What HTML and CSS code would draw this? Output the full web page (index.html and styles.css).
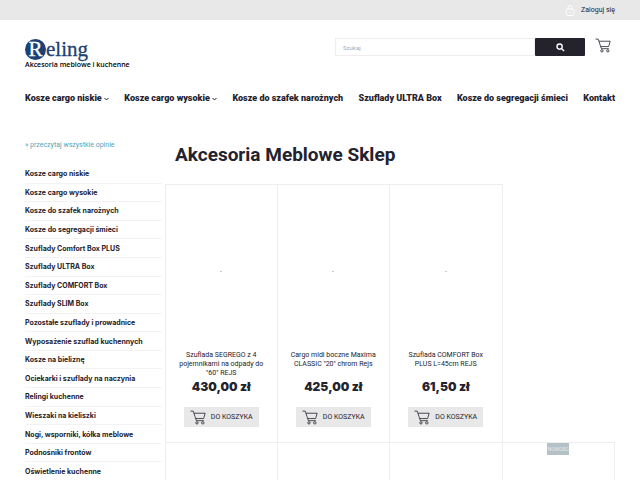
FILE: index.html
```html
<!DOCTYPE html>
<html lang="pl">
<head>
    <title>Akcesoria Meblowe Sklep</title>
    <meta charset="UTF-8">
    <link rel="stylesheet" href="styles.css">
</head>
<body>
    <svg class="symbols" aria-hidden="true">
        <symbol id="cart" viewBox="0 0 30 28">
            <path d="M1 2h5l6 18h14M7.500 6h21l-3 10H11" />
            <circle cx="13" cy="24" r="2.200" />
            <circle cx="24" cy="24" r="2.200" />
        </symbol>
    </svg>

    <div class="topbar">
        <a href="#" class="login">
            <svg class="lock" viewBox="0 0 10 12"><path d="M3 5V3.500a2 2 0 0 1 4 0V5" /><rect x="1" y="5" width="8" height="6.500" rx="2" /><path d="M5 7.500v2" /></svg>
            Zaloguj się
        </a>
    </div>

    <header class="header">
        <a href="#" class="logo">
            <span class="logo-name"><span class="logo-letter">R</span>eling</span>
            <span class="logo-text">Akcesoria meblowe i kuchenne</span>
        </a>
        <form class="search">
            <input type="text" name="search" placeholder="Szukaj" aria-label="Szukaj">
            <button type="submit" aria-label="Szukaj">
                <svg viewBox="0 0 10 10"><circle cx="4" cy="4" r="2.900" /><path d="M6.300 6.300L9 9" /></svg>
            </button>
        </form>
        <a href="#" class="basket" aria-label="Koszyk"><svg class="cart"><use href="#cart" /></svg></a>
    </header>

    <nav class="menu">
        <a href="#">Kosze cargo niskie <svg class="arrow" viewBox="0 0 5 4"><path d="M0.500 1l2 2 2-2" /></svg></a>
        <a href="#">Kosze cargo wysokie <svg class="arrow" viewBox="0 0 5 4"><path d="M0.500 1l2 2 2-2" /></svg></a>
        <a href="#">Kosze do szafek narożnych</a>
        <a href="#">Szuflady ULTRA Box</a>
        <a href="#">Kosze do segregacji śmieci</a>
        <a href="#">Kontakt</a>
    </nav>

    <div class="content">
        <aside class="sidebar">
            <a href="#" class="reviews">» przeczytaj wszystkie opinie</a>
            <ul class="categories">
                <li><a href="#">Kosze cargo niskie</a></li>
                <li><a href="#">Kosze cargo wysokie</a></li>
                <li><a href="#">Kosze do szafek narożnych</a></li>
                <li><a href="#">Kosze do segregacji śmieci</a></li>
                <li><a href="#">Szuflady Comfort Box PLUS</a></li>
                <li><a href="#">Szuflady ULTRA Box</a></li>
                <li><a href="#">Szuflady COMFORT Box</a></li>
                <li><a href="#">Szuflady SLIM Box</a></li>
                <li><a href="#">Pozostałe szuflady i prowadnice</a></li>
                <li><a href="#">Wyposażenie szuflad kuchennych</a></li>
                <li><a href="#">Kosze na bieliznę</a></li>
                <li><a href="#">Ociekarki i szuflady na naczynia</a></li>
                <li><a href="#">Relingi kuchenne</a></li>
                <li><a href="#">Wieszaki na kieliszki</a></li>
                <li><a href="#">Nogi, wsporniki, kółka meblowe</a></li>
                <li><a href="#">Podnośniki frontów</a></li>
                <li><a href="#">Oświetlenie kuchenne</a></li>
            </ul>
        </aside>

        <main class="shop">
            <h1>Akcesoria Meblowe Sklep</h1>
            <div class="products">
                <div class="product">
                    <div class="photo"></div>
                    <a href="#" class="name">Szuflada SEGREGO z 4 pojemnikami na odpady do "60" REJS</a>
                    <strong class="price">430,00 zł</strong>
                    <button type="button" class="buy"><svg class="cart"><use href="#cart" /></svg>DO KOSZYKA</button>
                </div>
                <div class="product">
                    <div class="photo"></div>
                    <a href="#" class="name">Cargo midi boczne Maxima CLASSIC "20" chrom Rejs</a>
                    <strong class="price">425,00 zł</strong>
                    <button type="button" class="buy"><svg class="cart"><use href="#cart" /></svg>DO KOSZYKA</button>
                </div>
                <div class="product">
                    <div class="photo"></div>
                    <a href="#" class="name">Szuflada COMFORT Box PLUS L=45cm REJS</a>
                    <strong class="price">61,50 zł</strong>
                    <button type="button" class="buy"><svg class="cart"><use href="#cart" /></svg>DO KOSZYKA</button>
                </div>
            </div>
            <div class="products">
                <div class="product"></div>
                <div class="product"></div>
                <div class="product"></div>
                <div class="product"><span class="badge">NOWOŚĆ</span></div>
            </div>
        </main>
    </div>
</body>
</html>
```
FILE: styles.css
```css
* {
    box-sizing: border-box;
}

body {
    height: 100vh;
    margin: 0;
    overflow: hidden;
    background: #fff;
    color: #23222d;
    font-family: Roboto, "Liberation Sans", sans-serif;
    font-size: 7px;
}

a {
    color: inherit;
    text-decoration: none;
}

svg {
    fill: none;
    stroke: currentColor;
}

.symbols {
    position: absolute;
    width: 0;
    height: 0;
}

/* top bar */
.topbar {
    display: flex;
    justify-content: flex-end;
    height: 20px;
    padding: 0 25px;
    background: #e8e8e8;
}

.login {
    display: flex;
    align-items: center;
    gap: 6px;
}

.lock {
    width: 10px;
    height: 12px;
    stroke: #fff;
}

/* header */
.header {
    display: flex;
    align-items: flex-start;
    padding: 18px 29px 0 25px;
}

.logo {
    display: block;
    margin-right: auto;
    color: #1d4174;
}

.logo-name {
    display: flex;
    align-items: center;
    height: 22px;
    font-family: "Liberation Serif", serif;
    font-size: 21px;
    line-height: 20px;
    -webkit-text-stroke: 0.3px;
}

.logo-letter {
    width: 21px;
    height: 21px;
    border-radius: 50%;
    background: #1d4174;
    color: #fff;
    line-height: 21px;
    text-align: center;
}

.logo-text {
    display: block;
    color: #000;
    font-family: "Open Sans", sans-serif;
    font-size: 7px;
    font-weight: 600;
    line-height: 9px;
}

.search {
    display: flex;
    width: 250px;
    height: 18px;
}

.search input {
    flex: 1;
    min-width: 0;
    padding: 0 7px;
    border: 1px solid #eee;
    font-family: inherit;
    font-size: 6px;
}

.search input::placeholder {
    color: #aaa;
}

.search button {
    display: flex;
    align-items: center;
    justify-content: center;
    width: 50px;
    padding: 0;
    border: none;
    border-radius: 1px;
    background: #23222d;
    color: #fff;
}

.search svg {
    width: 9px;
    height: 9px;
    stroke-width: 1.5;
}

.basket {
    margin-left: 10px;
}

.cart {
    display: block;
    width: 16px;
    height: 15px;
    stroke-width: 1.5;
}

/* main menu */
.menu {
    display: flex;
    justify-content: space-between;
    padding: 23px 25px 0;
    font-size: 9px;
    font-weight: 900;
    line-height: 12px;
    white-space: nowrap;
}

.arrow {
    width: 5px;
    height: 4px;
}

.content {
    display: flex;
    gap: 3px;
    padding: 36px 25px 0;
}

/* left column */
.sidebar {
    width: 137px;
}

.reviews {
    display: block;
    color: #51a5ba;
    font-size: 7px;
    line-height: 10px;
}

.categories {
    display: grid;
    grid-auto-rows: 1fr;
    min-height: 316px;
    margin: 15px 0 0;
    padding: 0;
    list-style: none;
}

.categories li {
    display: flex;
    align-items: center;
    border-bottom: 1px solid #f3f3f3;
    font-family: Inter, sans-serif;
    font-weight: 700;
    white-space: nowrap;
}

/* products */
.shop {
    flex: 1;
}

h1 {
    margin: 3px 0 18px 10px;
    font-size: 19px;
    line-height: 23px;
}

.products {
    display: grid;
    grid-template-columns: repeat(4, 1fr);
}

.product {
    display: flex;
    flex-direction: column;
    align-items: center;
    min-height: 258px;
    border-top: 1px solid #eee;
    border-right: 1px solid #eee;
    text-align: center;
}

.product:first-child {
    border-left: 1px solid #eee;
}

.photo {
    display: flex;
    align-items: center;
    justify-content: center;
    width: 100%;
    height: 166px;
    padding-top: 6px;
}

.photo::before {
    content: "";
    width: 2px;
    height: 1px;
    background: #ccc;
}

.name {
    width: 92px;
    height: 27px;
    line-height: 9px;
}

.price {
    margin: 1px 0 12px;
    font-family: Inter, sans-serif;
    font-size: 12px;
    font-weight: 900;
    line-height: 16px;
}

.buy {
    display: flex;
    align-items: center;
    justify-content: center;
    gap: 5px;
    width: 75px;
    height: 20px;
    padding: 0;
    border: none;
    background: #e8e8e8;
    color: #23222d;
    font-family: inherit;
    font-size: 7px;
}

.badge {
    width: 22px;
    height: 12px;
    background: #b4c1c7;
    color: #e4eaec;
    font-size: 5px;
    line-height: 12px;
}
```
